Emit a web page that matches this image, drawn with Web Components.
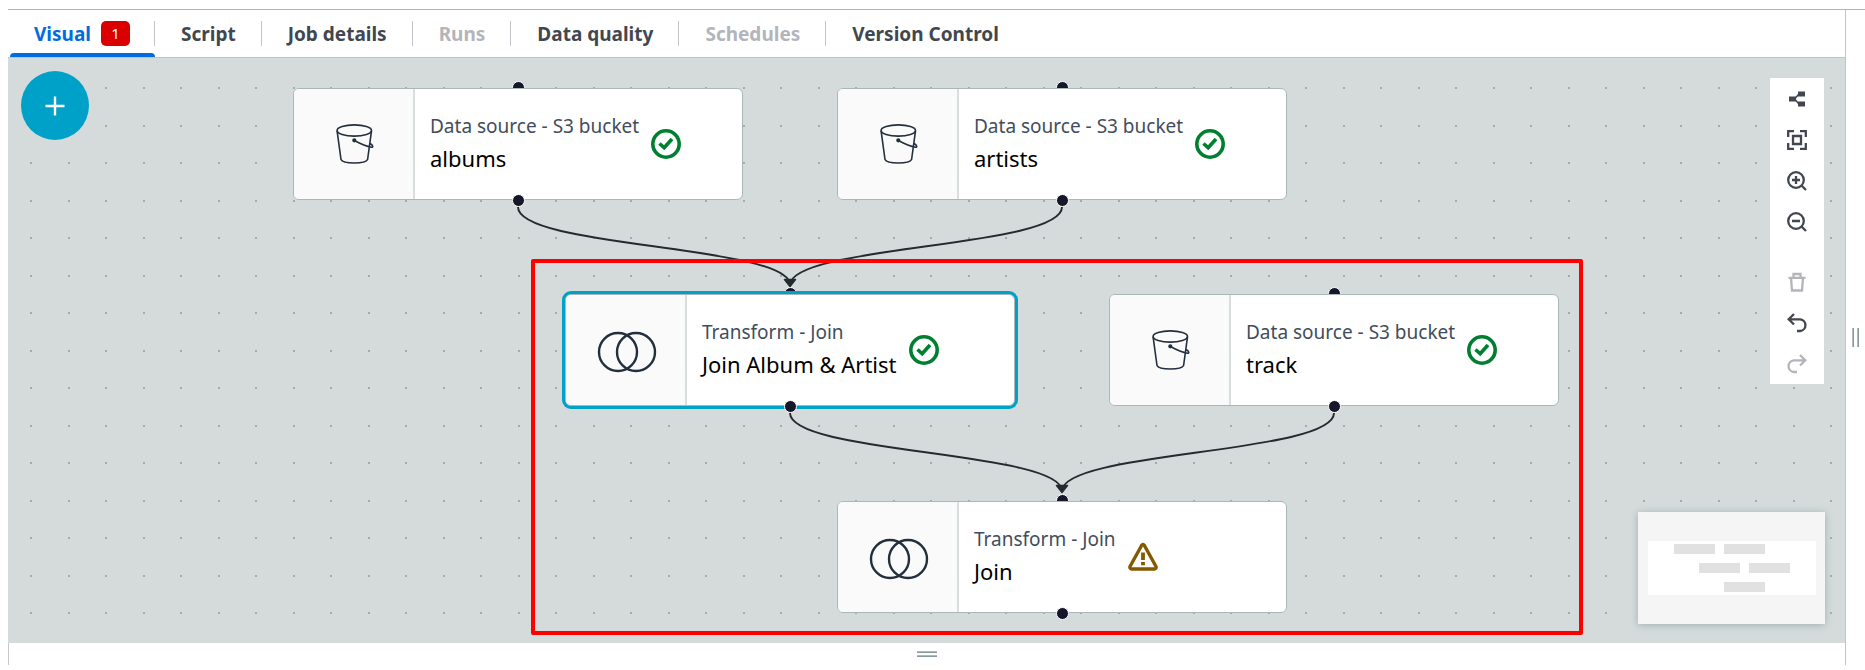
<!DOCTYPE html>
<html lang="en">
<head>
<meta charset="utf-8">
<meta name="viewport" content="width=device-width, initial-scale=1">
<title>Visual job editor</title>
<style>
  html, body { margin: 0; height: 100%; }
  body { background: #fff; font-family: "Noto Sans", "Open Sans", sans-serif; color: #414750; }
</style>
</head>
<body>
<job-editor></job-editor>

<template id="t-editor">
  <style>
    :host { display: flex; flex-direction: column; box-sizing: border-box; min-height: 100vh; padding: 9px 0 5px 8px; }
    .shell { flex: 1; display: flex; border-top: 1px solid #aab7b8; }
    .main { flex: 1; min-width: 0; display: flex; flex-direction: column; border-right: 1px solid #c1c4c9; }
    flow-canvas { flex: 1; }
    .bottom { height: 22px; display: flex; align-items: center; justify-content: center; border-left: 1px solid #c6c6cd; }
    .side { width: 19px; display: flex; align-items: center; justify-content: center; }
  </style>
  <div class="shell">
    <div class="main">
      <tab-bar>
        <tab-item selected count="1">Visual</tab-item>
        <tab-item>Script</tab-item>
        <tab-item>Job details</tab-item>
        <tab-item disabled>Runs</tab-item>
        <tab-item>Data quality</tab-item>
        <tab-item disabled>Schedules</tab-item>
        <tab-item>Version Control</tab-item>
      </tab-bar>
      <flow-canvas>
        <flow-node x="285" y="30" icon="bucket" status="ok" kind="Data source - S3 bucket">albums</flow-node>
        <flow-node x="829" y="30" icon="bucket" status="ok" kind="Data source - S3 bucket">artists</flow-node>
        <flow-node x="557" y="236" icon="join" status="ok" kind="Transform - Join" selected>Join Album &amp; Artist</flow-node>
        <flow-node x="1101" y="236" icon="bucket" status="ok" kind="Data source - S3 bucket">track</flow-node>
        <flow-node x="829" y="443" icon="join" status="warning" kind="Transform - Join">Join</flow-node>
      </flow-canvas>
      <div class="bottom"><drag-grip></drag-grip></div>
    </div>
    <div class="side"><drag-grip vertical></drag-grip></div>
  </div>
</template>

<template id="t-tabs">
  <style>
    :host { display: flex; height: 47px; padding-left: 2px; border-bottom: 1px solid #c1c4c9; }
  </style>
  <slot></slot>
</template>

<template id="t-tab">
  <style>
    :host { display: flex; align-items: center; position: relative; }
    button { height: 100%; display: flex; align-items: center; gap: 10px; margin: 0; padding: 0 25px 0 26px; border: 0; background: none;
      font: 700 19px/24px "Noto Sans", "Open Sans", sans-serif; color: #414750; cursor: pointer; white-space: nowrap; }
    button:disabled { color: #b4b4bb; cursor: default; }
    :host([selected]) button { padding: 0 24px; color: #006ce0; }
    :host([selected])::after { content: ""; position: absolute; left: 0; right: 0; bottom: 0; height: 4px; border-radius: 4px 4px 0 0; background: #006ce0; }
    .badge { width: 29px; border-radius: 5px; background: #db0000; color: #fff; font-size: 15px; font-weight: 400; line-height: 25px; text-align: center; }
    .rule { width: 1px; height: 25px; background: #c1c4c9; }
    :host(:last-child) .rule { display: none; }
  </style>
  <button type="button"><slot></slot></button><span class="rule"></span>
</template>

<template id="t-grip">
  <style>
    :host { display: flex; flex-direction: column; gap: 2px; cursor: row-resize; }
    i { box-sizing: border-box; width: 20px; height: 2px; background: #aebabb; border-bottom: 1px solid #879a9b; }
    :host([vertical]) { flex-direction: row; gap: 3px; cursor: col-resize; }
    :host([vertical]) i { width: 2px; height: 19px; border-bottom: 0; border-right: 1px solid #879a9b; }
  </style>
  <i></i><i></i>
</template>

<template id="t-canvas">
  <style>
    :host { display: block; position: relative; overflow: hidden; min-height: 585px; background: #d5dbdb; }
    .edges { position: absolute; inset: 0; width: 100%; height: 100%; }
    .add { position: absolute; left: 13px; top: 13px; width: 68px; height: 69px; border: 0; border-radius: 50%; padding: 0; background: #00a1c9;
      display: flex; align-items: center; justify-content: center; cursor: pointer; }
    .highlight { position: absolute; left: 523px; top: 201px; width: 1044px; height: 368px; border: 4px solid #f00; border-radius: 2px; pointer-events: none; }
    tool-bar { position: absolute; top: 20px; right: 21px; }
    mini-map { position: absolute; right: 20px; bottom: 19px; }
  </style>
  <svg class="edges" aria-hidden="true">
    <defs>
      <pattern id="dots" width="75" height="75" patternUnits="userSpaceOnUse">
        <path fill="#a4abac" d="M22 29h2v2h-2zM60 29h2v2h-2zM22 67h2v2h-2zM60 67h2v2h-2z"/>
      </pattern>
    </defs>
    <rect width="100%" height="100%" fill="url(#dots)"/>
    <g fill="none" stroke="#232b31" stroke-width="1.900">
      <path d="M510 149C510 190 782 187 782 227"/>
      <path d="M1054 149C1054 190 782 187 782 227"/>
      <path d="M782 355C782 396 1054 393 1054 433"/>
      <path d="M1326 355C1326 396 1054 393 1054 433"/>
    </g>
    <path fill="#232b31" stroke="#232b31" stroke-width="1.500" stroke-linejoin="round" d="M776.500 221.500h11L782 228.500zM1048.500 427.500h11L1054 434.500z"/>
  </svg>
  <slot></slot>
  <div class="highlight"></div>
  <button class="add" type="button" aria-label="Add node">
    <svg width="20" height="20" viewBox="0 0 20 20" fill="none" stroke="#fff" stroke-width="2.400"><path d="M10 .5v19M.5 10h19"/></svg>
  </button>
  <tool-bar></tool-bar>
  <mini-map></mini-map>
</template>

<template id="t-node">
  <style>
    :host { position: absolute; left: var(--x); top: var(--y); width: 450px; height: 112px; }
    .card { position: relative; box-sizing: border-box; height: 100%; display: flex; border: 1px solid #aab7b8; border-radius: 6px; overflow: hidden; background: #fff; }
    :host([selected]) .card { box-shadow: 0 0 0 3px #00a1c9; }
    .icon { flex: none; box-sizing: border-box; width: 121px; padding-left: 2px; display: flex; align-items: center; justify-content: center; background: #fafafa; border-right: 2px solid #d9dfdf; }
    .body { display: flex; align-items: center; gap: 12px; padding-left: 15px; white-space: nowrap; }
    .text { display: flex; flex-direction: column; gap: 4px; }
    .kind { font-size: 19px; line-height: 24px; color: #414d5c; }
    .name { font-size: 22px; line-height: 32px; color: #000; }
    .port { position: absolute; left: 219px; width: 11px; height: 11px; border: 1px solid #fff; border-radius: 50%; background: #16172a; }
    .in { top: -7px; }
    .out { bottom: -7px; }
    svg { display: block; }
  </style>
  <span class="port in"></span>
  <div class="card">
    <div class="icon"></div>
    <div class="body">
      <div class="text"><span class="kind"></span><span class="name"><slot></slot></span></div>
      <div class="status"></div>
    </div>
  </div>
  <span class="port out"></span>
</template>

<template id="t-tools">
  <style>
    :host { display: flex; flex-direction: column; width: 54px; background: #fff; }
    button { height: 41px; display: flex; align-items: center; justify-content: center; margin: 0; padding: 0; border: 0; background: none; color: #424650; cursor: pointer; }
    button:disabled { color: #b4b4bb; cursor: default; }
    .gap { height: 19px; }
    svg { display: block; fill: none; stroke: currentColor; stroke-width: 2.300; }
  </style>
  <button type="button" aria-label="Arrange"><svg width="20" height="20" viewBox="0 0 20 20"><path d="M2 7.500h7v5H2zM11 2.500h7v5h-7zM11 12.500h7v5h-7z" fill="currentColor" stroke="none"/><path d="M11.500 5.500L8.500 9M11.500 14.500L8.500 11" stroke-width="1.500"/></svg></button>
  <button type="button" aria-label="Fit to screen"><svg width="20" height="20" viewBox="0 0 20 20"><path d="M7 1.200H1.200V7M13 1.200h5.800V7M7 18.800H1.200V13M13 18.800h5.800V13M6 6h8v8H6z"/></svg></button>
  <button type="button" aria-label="Zoom in"><svg width="20" height="20" viewBox="0 0 20 20"><circle cx="9" cy="9" r="7.800"/><path d="M14.500 14.500l4.500 4.500M9 5v8M5 9h8"/></svg></button>
  <button type="button" aria-label="Zoom out"><svg width="20" height="20" viewBox="0 0 20 20"><circle cx="9" cy="9" r="7.800"/><path d="M14.500 14.500l4.500 4.500M5 9h8"/></svg></button>
  <span class="gap"></span>
  <button type="button" aria-label="Delete" disabled><svg width="20" height="20" viewBox="0 0 20 20"><path d="M1.500 5.800h17M6.500 5.500V2h7v3.500M4 6l1 12.500h10L16 6"/></svg></button>
  <button type="button" aria-label="Undo"><svg width="20" height="20" viewBox="0 0 20 20"><path d="M7 1L1.700 6.300L7 11.500M2 6.300h11.300a5.900 5.900 0 0 1 0 11.700H10"/></svg></button>
  <button type="button" aria-label="Redo" disabled><svg width="20" height="20" viewBox="0 0 20 20"><path d="M13 1l5.300 5.300L13 11.500M18 6.300H6.700a5.900 5.900 0 0 0 0 11.700H10"/></svg></button>
</template>

<template id="t-map">
  <style>
    :host { display: block; background: #f5f5f5; box-shadow: 0 1px 8px #9fb0b0; }
    svg { display: block; }
  </style>
  <svg width="187" height="112" viewBox="0 0 187 112" role="img" aria-label="Mini map">
    <path fill="#fff" d="M10 29h168v54H10z"/>
    <path fill="#e1e1e1" d="M36 32h41v10H36zM86 32h41v10H86zM61 51h41v10H61zM111 51h41v10h-41zM86 70h41v10H86z"/>
  </svg>
</template>

<script>
const ICONS = {
  bucket: `<svg width="38" height="40" viewBox="0 0 38 40" fill="none" stroke="#232f3e" stroke-width="1.600" stroke-linejoin="round"><ellipse cx="18.300" cy="6.500" rx="17.200" ry="5.600"/><path d="M1.100 6.800L5 35.500C7 40.200 29.500 40.200 31.600 35.500L35.500 6.800M18.300 16.500C23 19 30 22.300 35.500 23.300C37.500 23.500 37 20.800 34 19.500"/><circle cx="18.300" cy="16.300" r="1.300" fill="#232f3e"/></svg>`,
  join: `<svg width="60" height="46" viewBox="0 0 60 46" fill="none" stroke="#232f3e" stroke-width="2.400"><circle cx="21" cy="25" r="19"/><circle cx="39" cy="25" r="19"/></svg>`,
  ok: `<svg width="30" height="30" viewBox="0 0 30 30" fill="none" stroke="#00802f" stroke-width="3.600" role="img" aria-label="Ready"><circle cx="15" cy="15" r="13.200"/><path d="M8.500 14.500l4.700 4.300L21 10"/></svg>`,
  warning: `<svg width="30" height="30" viewBox="0 0 30 30" fill="none" stroke="#855900" stroke-width="3.400" stroke-linejoin="round" role="img" aria-label="Warning"><path d="M13.600 3.500Q15 1.300 16.400 3.500L28 24.500Q28.500 26.600 26.500 27H3.500Q1.500 26.600 2 24.500z"/><path d="M15 10.500v7.500M15 20v3.300" stroke-width="3.800"/></svg>`
};

function define(name, templateId, setup) {
  customElements.define(name, class extends HTMLElement {
    constructor() {
      super();
      this.attachShadow({ mode: 'open' }).append(document.getElementById(templateId).content.cloneNode(true));
    }
    connectedCallback() {
      if (setup && !this.ready) setup(this, this.shadowRoot);
      this.ready = true;
    }
  });
}

define('tab-bar', 't-tabs');
define('tab-item', 't-tab', (host, root) => {
  const button = root.querySelector('button');
  button.disabled = host.hasAttribute('disabled');
  if (host.hasAttribute('count')) {
    const badge = document.createElement('span');
    badge.className = 'badge';
    badge.textContent = host.getAttribute('count');
    button.append(badge);
  }
});
define('drag-grip', 't-grip');
define('flow-node', 't-node', (host, root) => {
  host.style.setProperty('--x', host.getAttribute('x') + 'px');
  host.style.setProperty('--y', host.getAttribute('y') + 'px');
  root.querySelector('.kind').textContent = host.getAttribute('kind');
  root.querySelector('.icon').innerHTML = ICONS[host.getAttribute('icon')];
  root.querySelector('.status').innerHTML = ICONS[host.getAttribute('status')];
});
define('tool-bar', 't-tools');
define('mini-map', 't-map');
define('flow-canvas', 't-canvas');
define('job-editor', 't-editor');
</script>
</body>
</html>
